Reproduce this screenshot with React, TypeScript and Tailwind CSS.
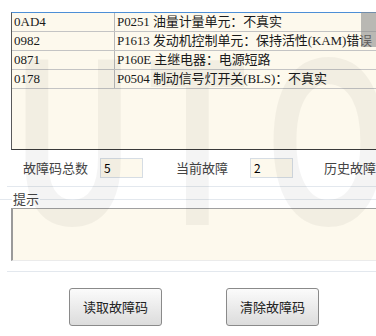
import React from "react";

const rows = [
  { code: "0AD4", desc: "P0251 油量计量单元：不真实" },
  { code: "0982", desc: "P1613 发动机控制单元：保持活性(KAM)错误" },
  { code: "0871", desc: "P160E 主继电器：电源短路" },
  { code: "0178", desc: "P0504 制动信号灯开关(BLS)：不真实" },
];

const cellFont = { fontFamily: '"Liberation Serif", "Noto Sans CJK SC", serif' };
const uiFont = { fontFamily: '"Noto Sans CJK SC", "Liberation Sans", sans-serif' };

export default function App() {
  return (
    <div className="relative w-[376px] h-[336px] bg-white overflow-hidden" style={uiFont}>
      {/* table */}
      <div className="pt-[12px] pl-[11px]">
        <div className="w-[380px] h-[138px] bg-[#fdf9ed] border-t border-t-[#4d8fd6] border-l border-l-[#5a5a5a] border-b border-b-[#3a3a3a]">
          {rows.map((r) => (
            <div key={r.code} className="flex h-[19px] border-b border-b-[#c4c4c4] text-[13px] leading-[18px] text-[#1a1a1a]" style={cellFont}>
              <div className="w-[103px] pl-[2px] border-r border-r-[#b8b8b8] whitespace-nowrap">{r.code}</div>
              <div className="pl-[2px] whitespace-nowrap tracking-[-0.1px]">{r.desc}</div>
            </div>
          ))}
        </div>
      </div>

      {/* counters */}
      <div className="flex items-center h-[37px] border-b border-b-[#e3e8ee] ml-[7px] text-[13px] text-[#444]">
        <span className="ml-[16px] whitespace-nowrap">故障码总数</span>
        <div className="ml-[12px] w-[60px] h-[20px] bg-[#fdf9ed] border border-[#d6dde4] pl-[3px] text-[12px] leading-[18px] text-black">5</div>
        <span className="ml-[33px] whitespace-nowrap">当前故障</span>
        <div className="ml-[22px] w-[60px] h-[20px] bg-[#fdf9ed] border border-[#d6dde4] pl-[3px] text-[12px] leading-[18px] text-black">2</div>
        <span className="ml-[31px] whitespace-nowrap">历史故障</span>
      </div>

      {/* hint group */}
      <div className="flex items-center h-[21px] pt-[3px]">
        <div className="w-[12px] h-px bg-[#e3e8ee]" />
        <span className="text-[13px] leading-[18px] text-[#444] px-[1px]">提示</span>
        <div className="flex-1 h-px bg-[#e3e8ee]" />
      </div>
      <div className="ml-[11px] w-[380px] h-[53px] bg-[#fdf9ed] border-t border-t-[#a0a0a0] border-l-2 border-l-[#9a9a9a] border-b border-b-[#ebebeb]" />
      <div className="ml-[7px] mt-[10px] h-px bg-[#e3e8ee]" />

      {/* buttons */}
      <div className="flex mt-[16px] pl-[69px] gap-[64px]">
        <button className="w-[93px] h-[38px] rounded-[3px] border border-[#8a8a8a] bg-gradient-to-b from-[#fbfbfb] to-[#dcdcdc] text-[13px] text-[#222]">读取故障码</button>
        <button className="w-[93px] h-[38px] rounded-[3px] border border-[#8a8a8a] bg-gradient-to-b from-[#fbfbfb] to-[#dcdcdc] text-[13px] text-[#222]">清除故障码</button>
      </div>

      {/* top-right grey block */}
      <div className="absolute left-[361px] top-[12px] w-[15px] h-[35px] bg-[#8c8c8c]/60 pointer-events-none" />

      {/* watermark */}
      <div aria-hidden="true" className="absolute inset-0 pointer-events-none select-none" style={{ fontFamily: '"Liberation Sans", sans-serif' }}>
        <span className="absolute left-[16px] top-[22px] text-[240px] leading-none font-bold text-black/[0.045] origin-left scale-x-[0.66]">U</span>
        <span className="absolute left-[149px] top-[22px] text-[240px] leading-none font-bold text-black/[0.045] origin-left scale-x-[0.66]">T</span>
        <span className="absolute left-[267px] top-[22px] text-[240px] leading-none font-bold text-black/[0.045] origin-left scale-x-[0.66]">O</span>
      </div>
    </div>
  );
}
